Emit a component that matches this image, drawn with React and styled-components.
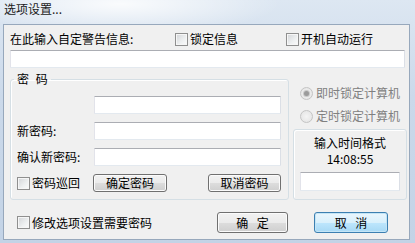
import React from 'react';
import styled, { createGlobalStyle } from 'styled-components';

const GlobalStyle = createGlobalStyle`
  html, body {
    margin: 0;
    padding: 0;
  }
  body {
    width: 415px;
    height: 243px;
    overflow: hidden;
    font-family: "Noto Sans CJK SC", "Noto Sans", sans-serif;
    font-size: 12px;
    color: #000;
    background: #c9d8ea;
  }
  * {
    box-sizing: border-box;
  }
`;

// 窗口外框 (Aero 玻璃)
const Frame = styled.div`
  width: 415px;
  height: 243px;
  display: flex;
  flex-direction: column;
  background:
    radial-gradient(ellipse 160px 30px at 120px 4px, rgba(255, 255, 255, 0.85), rgba(255, 255, 255, 0) 100%),
    linear-gradient(180deg, #dde7f2 0%, #cbd9ea 40%, #c3d3e6 100%);
`;

const TitleBar = styled.div`
  height: 24px;
  padding: 2px 0 0 4px;
  line-height: 14px;
  color: #1a1a1a;
`;

const Client = styled.div`
  margin-left: 3px;
  width: 407px;
  height: 216px;
  border: 1px solid #97a8bc;
  background: #f0f0f0;
  padding: 6px 4px 0 6px;
  display: flex;
  flex-direction: column;
`;

const TopRow = styled.div`
  display: flex;
  align-items: center;
  height: 16px;
`;

const Label = styled.span`
  width: ${(p) => p.$w || 'auto'};
  line-height: 14px;
  white-space: nowrap;
`;

const CheckItem = styled.label`
  display: flex;
  align-items: center;
  gap: 2px;
  width: ${(p) => p.$w || 'auto'};
  flex: ${(p) => (p.$grow ? 1 : 'none')};
  line-height: 14px;
  white-space: nowrap;
`;

const Box = styled.span`
  width: 13px;
  height: 13px;
  flex: none;
  border: 1px solid #8f8f8f;
  background: linear-gradient(135deg, #d2d4d7 0%, #eef0f1 60%, #fbfbfb 100%);
  box-shadow: inset 0 0 0 1px #f6f6f6;
`;

const TextInput = styled.div`
  height: ${(p) => p.$h || '18px'};
  width: ${(p) => p.$w || 'auto'};
  margin-top: ${(p) => p.$mt || '0'};
  background: #fff;
  border: 1px solid;
  border-color: #abadb3 #dbdfe6 #e3e9ef #e2e3ea;
  border-radius: 1px;
`;

const Middle = styled.div`
  display: flex;
  margin-top: 4px;
`;

const Group = styled.fieldset`
  width: 279px;
  min-width: 0;
  margin: 0;
  padding: 10px 6px 7px 6px;
  border: 1px solid #d5dfe5;
  border-radius: 3px;
  box-shadow: inset 1px 1px 0 #fff;
`;

const Legend = styled.legend`
  padding: 0 3px;
  margin-left: -3px;
  line-height: 14px;
  word-spacing: 4px;
`;

const FormGrid = styled.div`
  display: grid;
  grid-template-columns: 77px 187px;
  row-gap: 8px;
  align-items: center;
`;

const ButtonRow = styled.div`
  grid-column: 1 / -1;
  display: flex;
  align-items: center;
  height: 18px;
`;

const Button = styled.div`
  width: ${(p) => p.$w};
  height: ${(p) => p.$h || '18px'};
  margin-left: ${(p) => p.$ml || '0'};
  display: flex;
  align-items: center;
  justify-content: center;
  line-height: 14px;
  word-spacing: 6px;
  border: 1px solid ${(p) => (p.$focus ? '#3c7fb1' : '#707070')};
  border-radius: 3px;
  background: ${(p) =>
    p.$focus
      ? 'linear-gradient(180deg, #eaf6fd 0%, #d9f0fc 50%, #bee6fd 50%, #a7d9f5 100%)'
      : 'linear-gradient(180deg, #f2f2f2 0%, #ebebeb 50%, #dddddd 50%, #cfcfcf 100%)'};
  box-shadow: inset 0 0 0 1px ${(p) => (p.$focus ? '#c4e5f6' : '#fbfbfb')};
`;

const RightCol = styled.div`
  width: 114px;
  margin-left: 4px;
  margin-right: -2px;
  display: flex;
  flex-direction: column;
`;

const RadioItem = styled.div`
  display: flex;
  align-items: center;
  gap: 3px;
  height: 14px;
  padding-left: 7px;
  margin-top: ${(p) => p.$mt};
  color: #808080;
  line-height: 14px;
  white-space: nowrap;
`;

const Radio = styled.span`
  width: 13px;
  height: 13px;
  flex: none;
  border-radius: 50%;
  border: 1px solid #c4c4c4;
  background: radial-gradient(circle, #f4f4f4 0%, #e2e2e2 100%);
  display: flex;
  align-items: center;
  justify-content: center;
  &::after {
    content: '';
    width: 5px;
    height: 5px;
    border-radius: 50%;
    background: ${(p) => (p.$checked ? '#9b9b9b' : 'transparent')};
    box-shadow: ${(p) => (p.$checked ? '0 0 0 1px #c9c9c9' : 'none')};
  }
`;

const TimeBox = styled.div`
  flex: 1;
  margin-top: 6px;
  border: 1px solid #d5dfe5;
  border-radius: 3px;
  box-shadow: inset 1px 1px 0 #fff;
  display: flex;
  flex-direction: column;
  align-items: center;
  padding-top: 5px;
`;

const TimeText = styled.div`
  height: 16px;
  line-height: 16px;
  white-space: nowrap;
`;

const BottomRow = styled.div`
  display: flex;
  align-items: center;
  height: 21px;
  margin-top: 12px;
  padding: 0 17px 0 7px;
`;

export default function App() {
  return (
    <>
      <GlobalStyle />
      <Frame>
        <TitleBar>选项设置...</TitleBar>
        <Client>
          <TopRow>
            <Label $w="165px">在此输入自定警告信息:</Label>
            <CheckItem $w="111px">
              <Box />
              锁定信息
            </CheckItem>
            <CheckItem>
              <Box />
              开机自动运行
            </CheckItem>
          </TopRow>
          <TextInput $mt="3px" />

          <Middle>
            <Group>
              <Legend>密 码</Legend>
              <FormGrid>
                <span />
                <TextInput />
                <Label>新密码:</Label>
                <TextInput />
                <Label>确认新密码:</Label>
                <TextInput />
                <ButtonRow>
                  <CheckItem $w="76px">
                    <Box />
                    密码巡回
                  </CheckItem>
                  <Button $w="74px">确定密码</Button>
                  <Button $w="73px" $ml="auto">取消密码</Button>
                </ButtonRow>
              </FormGrid>
            </Group>

            <RightCol>
              <RadioItem $mt="14px">
                <Radio $checked />
                即时锁定计算机
              </RadioItem>
              <RadioItem $mt="9px">
                <Radio />
                定时锁定计算机
              </RadioItem>
              <TimeBox>
                <TimeText>输入时间格式</TimeText>
                <TimeText>14:08:55</TimeText>
                <TextInput $w="100px" $h="19px" $mt="5px" />
              </TimeBox>
            </RightCol>
          </Middle>

          <BottomRow>
            <CheckItem $grow>
              <Box />
              修改选项设置需要密码
            </CheckItem>
            <Button $w="71px" $h="21px">确 定</Button>
            <Button $w="74px" $h="21px" $ml="26px" $focus>
              取 消
            </Button>
          </BottomRow>
        </Client>
      </Frame>
    </>
  );
}
